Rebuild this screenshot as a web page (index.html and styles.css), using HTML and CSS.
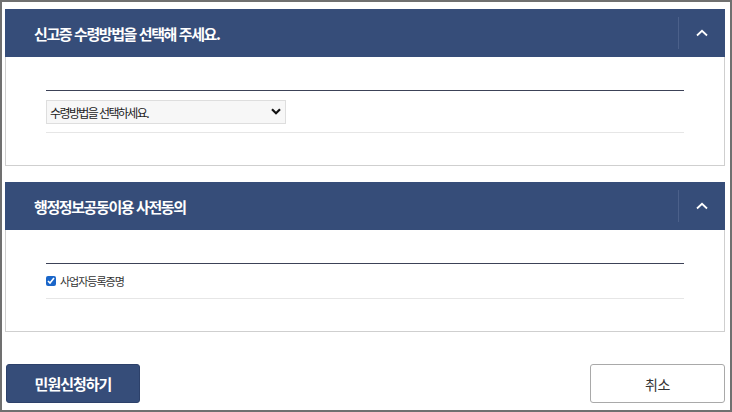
FILE: index.html
```html
<!DOCTYPE html>
<html lang="ko">
<head>
    <meta charset="UTF-8">
    <meta name="viewport" content="width=device-width, initial-scale=1.0">
    <title>민원신청</title>
    <link rel="stylesheet" href="styles.css">
</head>
<body>
    <div class="frame">
        <!-- 신고증 수령방법 -->
        <div class="panel">
            <div class="panel-head">
                <h2>신고증 수령방법을 선택해 주세요.</h2>
                <button class="toggle" type="button" aria-label="접기">
                    <svg width="12" height="8" viewBox="0 0 12 8"><path d="M1 6.5 6 1.8 11 6.5" fill="none" stroke="#fff" stroke-width="1.8"/></svg>
                </button>
            </div>
            <div class="panel-body">
                <div class="form-table">
                    <div class="form-row">
                        <div class="select-wrap">
                            <select id="receiveType">
                                <option>수령방법을 선택하세요.</option>
                                <option>온라인발급(본인출력)</option>
                                <option>방문수령</option>
                                <option>우편수령</option>
                            </select>
                            <svg class="select-arrow" width="10" height="7" viewBox="0 0 10 7"><path d="M1 1.2 5 5.2 9 1.2" fill="none" stroke="#111" stroke-width="2.2"/></svg>
                        </div>
                    </div>
                </div>
            </div>
        </div>

        <!-- 행정정보공동이용 사전동의 -->
        <div class="panel">
            <div class="panel-head">
                <h2>행정정보공동이용 사전동의</h2>
                <button class="toggle" type="button" aria-label="접기">
                    <svg width="12" height="8" viewBox="0 0 12 8"><path d="M1 6.5 6 1.8 11 6.5" fill="none" stroke="#fff" stroke-width="1.8"/></svg>
                </button>
            </div>
            <div class="panel-body">
                <div class="form-table">
                    <div class="form-row check-row">
                        <input type="checkbox" id="bizCert" checked>
                        <label for="bizCert">사업자등록증명</label>
                    </div>
                </div>
            </div>
        </div>

        <div class="actions">
            <button class="btn btn-primary" type="button">민원신청하기</button>
            <button class="btn btn-cancel" type="button">취소</button>
        </div>
    </div>
</body>
</html>
```

FILE: styles.css
```css
* {
    box-sizing: border-box;
}
html, body {
    margin: 0;
    padding: 0;
    background: #fff;
}
body {
    font-family: "Noto Sans CJK KR", "Noto Sans", sans-serif;
    color: #333;
}
.frame {
    height: 412px;
    border: 2px solid #707070;
    padding: 7px 5px 0 3px;
}
.panel {
    margin-bottom: 16px;
}
.panel-head {
    display: flex;
    align-items: center;
    height: 48px;
    background-color: #364d79;
    padding-left: 29px;
}
.panel-head h2 {
    flex: 1;
    margin: 0;
    font-size: 15px;
    font-weight: bold;
    letter-spacing: -1.4px;
    color: #fff;
}
.toggle {
    width: 47px;
    height: 32px;
    padding: 0;
    border: none;
    border-left: 1px solid #4b608a;
    background: transparent;
    display: flex;
    align-items: center;
    justify-content: center;
    cursor: pointer;
}
.panel-body {
    border: 1px solid #cfcfcf;
    border-top: none;
    padding: 33px 40px 32px 40px;
}
.form-table {
    border-top: 1px solid #3c4257;
}
.form-row {
    display: flex;
    align-items: center;
    height: 42px;
    border-bottom: 1px solid #e6e6e6;
}
.select-wrap {
    position: relative;
    width: 240px;
}
.select-wrap select {
    appearance: none;
    -webkit-appearance: none;
    width: 100%;
    height: 24px;
    padding: 0 20px 0 3px;
    border: 1px solid #dedede;
    background: #f7f7f7;
    font-family: inherit;
    font-size: 12px;
    letter-spacing: -1.6px;
    color: #222;
    outline: none;
}
.select-arrow {
    position: absolute;
    right: 5px;
    top: 9px;
}
.check-row {
    height: 35px;
}
.check-row input {
    width: 10px;
    height: 10px;
    margin: 0 4px 0 0;
    accent-color: #1a66c9;
}
.check-row label {
    font-size: 11px;
    letter-spacing: -1px;
    color: #333;
}
.actions {
    display: flex;
    justify-content: space-between;
    padding: 16px 0 0 1px;
}
.btn {
    width: 135px;
    height: 39px;
    border-radius: 3px;
    font-family: inherit;
    cursor: pointer;
}
.btn-primary {
    background-color: #364d79;
    border: 1px solid #2d416a;
    color: #fff;
    font-size: 15px;
    font-weight: bold;
    letter-spacing: -1px;
    width: 134px;
}
.btn-cancel {
    background: #fff;
    border: 1px solid #a9a9a9;
    color: #333;
    font-size: 14px;
    letter-spacing: -0.5px;
}
```
